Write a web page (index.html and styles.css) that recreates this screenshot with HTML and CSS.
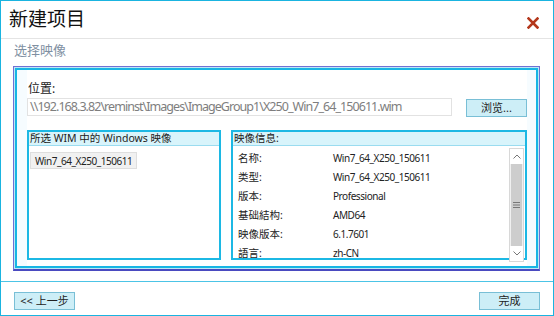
FILE: index.html
```html
<!DOCTYPE html>
<html lang="zh-CN">

<head>
    <meta charset="UTF-8">
    <title>新建项目</title>
    <link rel="stylesheet" href="styles.css">
</head>

<body>
    <div class="window">
        <div class="titlebar">
            <h1>新建项目</h1>
            <svg class="close" width="12" height="12" viewBox="0 0 12 12">
                <path d="M1.5 1.5 L10.5 10.5 M10.5 1.5 L1.5 10.5" stroke="#b4381c" stroke-width="2.6" stroke-linecap="square" />
            </svg>
        </div>
        <div class="subtitle">选择映像</div>

        <div class="frame">
            <div class="frame-inner">
                <div class="content">
                    <label class="loc-label">位置:</label>
                    <div class="loc-row">
                        <div class="path">\\192.168.3.82\reminst\Images\ImageGroup1\X250_Win7_64_150611.wim</div>
                        <button class="btn browse">浏览...</button>
                    </div>

                    <div class="panels">
                        <div class="panel left">
                            <div class="panel-head">所选 WIM 中的 Windows 映像</div>
                            <div class="panel-body">
                                <div class="image-item">Win7_64_X250_150611</div>
                            </div>
                        </div>
                        <div class="panel right">
                            <div class="panel-head">映像信息:</div>
                            <div class="panel-body info">
                                <div class="rows">
                                    <div class="row"><span class="key">名称:</span><span class="val">Win7_64_X250_150611</span></div>
                                    <div class="row"><span class="key">类型:</span><span class="val">Win7_64_X250_150611</span></div>
                                    <div class="row"><span class="key">版本:</span><span class="val">Professional</span></div>
                                    <div class="row"><span class="key">基础結构:</span><span class="val">AMD64</span></div>
                                    <div class="row"><span class="key">映像版本:</span><span class="val">6.1.7601</span></div>
                                    <div class="row"><span class="key">語言:</span><span class="val">zh-CN</span></div>
                                </div>
                                <div class="scrollbar">
                                    <div class="arrow">
                                        <svg width="8" height="5" viewBox="0 0 8 5"><path d="M0.5 4.5 L4 1 L7.5 4.5" fill="none" stroke="#777" stroke-width="1" /></svg>
                                    </div>
                                    <div class="thumb">
                                        <svg width="7" height="6" viewBox="0 0 7 6"><path d="M0 0.5 H7 M0 3 H7 M0 5.5 H7" stroke="#777" stroke-width="1" /></svg>
                                    </div>
                                    <div class="arrow">
                                        <svg width="8" height="5" viewBox="0 0 8 5"><path d="M0.5 0.5 L4 4 L7.5 0.5" fill="none" stroke="#777" stroke-width="1" /></svg>
                                    </div>
                                </div>
                            </div>
                        </div>
                    </div>
                </div>
            </div>
        </div>

        <div class="footer">
            <button class="btn">&lt;&lt; 上一步</button>
            <button class="btn">完成</button>
        </div>
    </div>
</body>

</html>
```

FILE: styles.css
```css
* {
    box-sizing: border-box;
}

body {
    margin: 0;
    font-family: "Noto Sans", "Noto Sans CJK SC", sans-serif;
    background: #fff;
}

.window {
    width: 554px;
    height: 316px;
    border: 1px solid #1ab4e0;
    display: flex;
    flex-direction: column;
}

.titlebar {
    height: 38px;
    border-bottom: 1px solid #e4e4e4;
    display: flex;
    align-items: center;
    justify-content: space-between;
    padding: 0 14px 0 8px;
}

.titlebar h1 {
    margin: 0;
    font-size: 19px;
    font-weight: normal;
    color: #111;
    line-height: 24px;
    margin-top: -1px;
}

.close {
    margin-top: 6px;
}

.subtitle {
    font-size: 13px;
    color: #8090a2;
    padding: 2px 0 0 13px;
    line-height: 18px;
    height: 27px;
}

.frame {
    margin: 0 13px 0 12px;
    border: 1px solid #7070d4;
    border-bottom: 2px solid #4a4ac0;
    padding: 1px;
    background: #bde6f6;
    height: 205px;
}

.frame-inner {
    border: 2px solid #18b6e4;
    background: #f6fcff;
    height: 100%;
    padding: 0 9px 0 10px;
}

.content {
    display: flex;
    flex-direction: column;
    background: #fff;
    height: 100%;
}

.loc-label {
    font-size: 12px;
    color: #222;
    padding: 10px 0 0 1px;
    line-height: 17px;
}

.loc-row {
    display: flex;
    align-items: flex-start;
    justify-content: space-between;
    margin-top: 1px;
}

.path {
    width: 425px;
    height: 18px;
    border: 1px solid #e2e2e2;
    font-size: 12.5px;
    line-height: 16px;
    color: #7e7e7e;
    padding-left: 2px;
    white-space: nowrap;
    overflow: hidden;
    letter-spacing: -0.95px;
}

.btn {
    font-family: "Noto Sans", "Noto Sans CJK SC", sans-serif;
    background: #cdeef7;
    border: 1px solid #79bfd6;
    width: 61px;
    height: 18px;
    font-size: 11px;
    line-height: 14px;
    color: #222;
    padding: 0;
}

.browse {
    margin-top: 1px;
}

.panels {
    display: flex;
    justify-content: space-between;
    margin-top: 13px;
}

.panel {
    border: 2px solid #1cb8e4;
    height: 130px;
    display: flex;
    flex-direction: column;
}

.panel.left {
    width: 194px;
}

.panel.right {
    width: 296px;
}

.panel-head {
    background: #d8f4fb;
    font-size: 10.5px;
    line-height: 13px;
    height: 14px;
    padding-left: 1px;
    color: #222;
    border-bottom: 1px solid #9adcf0;
}

.panel-body {
    flex: 1;
    padding: 2px 1px;
}

.image-item {
    display: inline-block;
    background: #f1f1f1;
    border: 1px solid #dedede;
    font-size: 10px;
    letter-spacing: -0.45px;
    line-height: 14px;
    height: 17px;
    padding: 1px 4px 0;
    color: #222;
}

.info {
    display: flex;
    padding: 2px 1px 1px 0;
}

.rows {
    flex: 1;
}

.row {
    display: flex;
    height: 19px;
    align-items: center;
    font-size: 10.5px;
    color: #222;
}

.key {
    width: 100px;
    padding-left: 5px;
}

.val {
    font-size: 10px;
    letter-spacing: -0.45px;
}

.scrollbar {
    width: 15px;
    border: 1px solid #d8d8d8;
    display: flex;
    flex-direction: column;
    background: #f0f0f0;
}

.arrow {
    height: 15px;
    background: #fff;
    display: flex;
    align-items: center;
    justify-content: center;
}

.thumb {
    flex: 1;
    background: #cdcdcd;
    display: flex;
    align-items: center;
    justify-content: center;
    margin: 0 1px;
}

.footer {
    margin-top: 10px;
    border-top: 1px solid #4cc4e6;
    display: flex;
    justify-content: space-between;
    padding: 10px 13px 0 13px;
}
```
